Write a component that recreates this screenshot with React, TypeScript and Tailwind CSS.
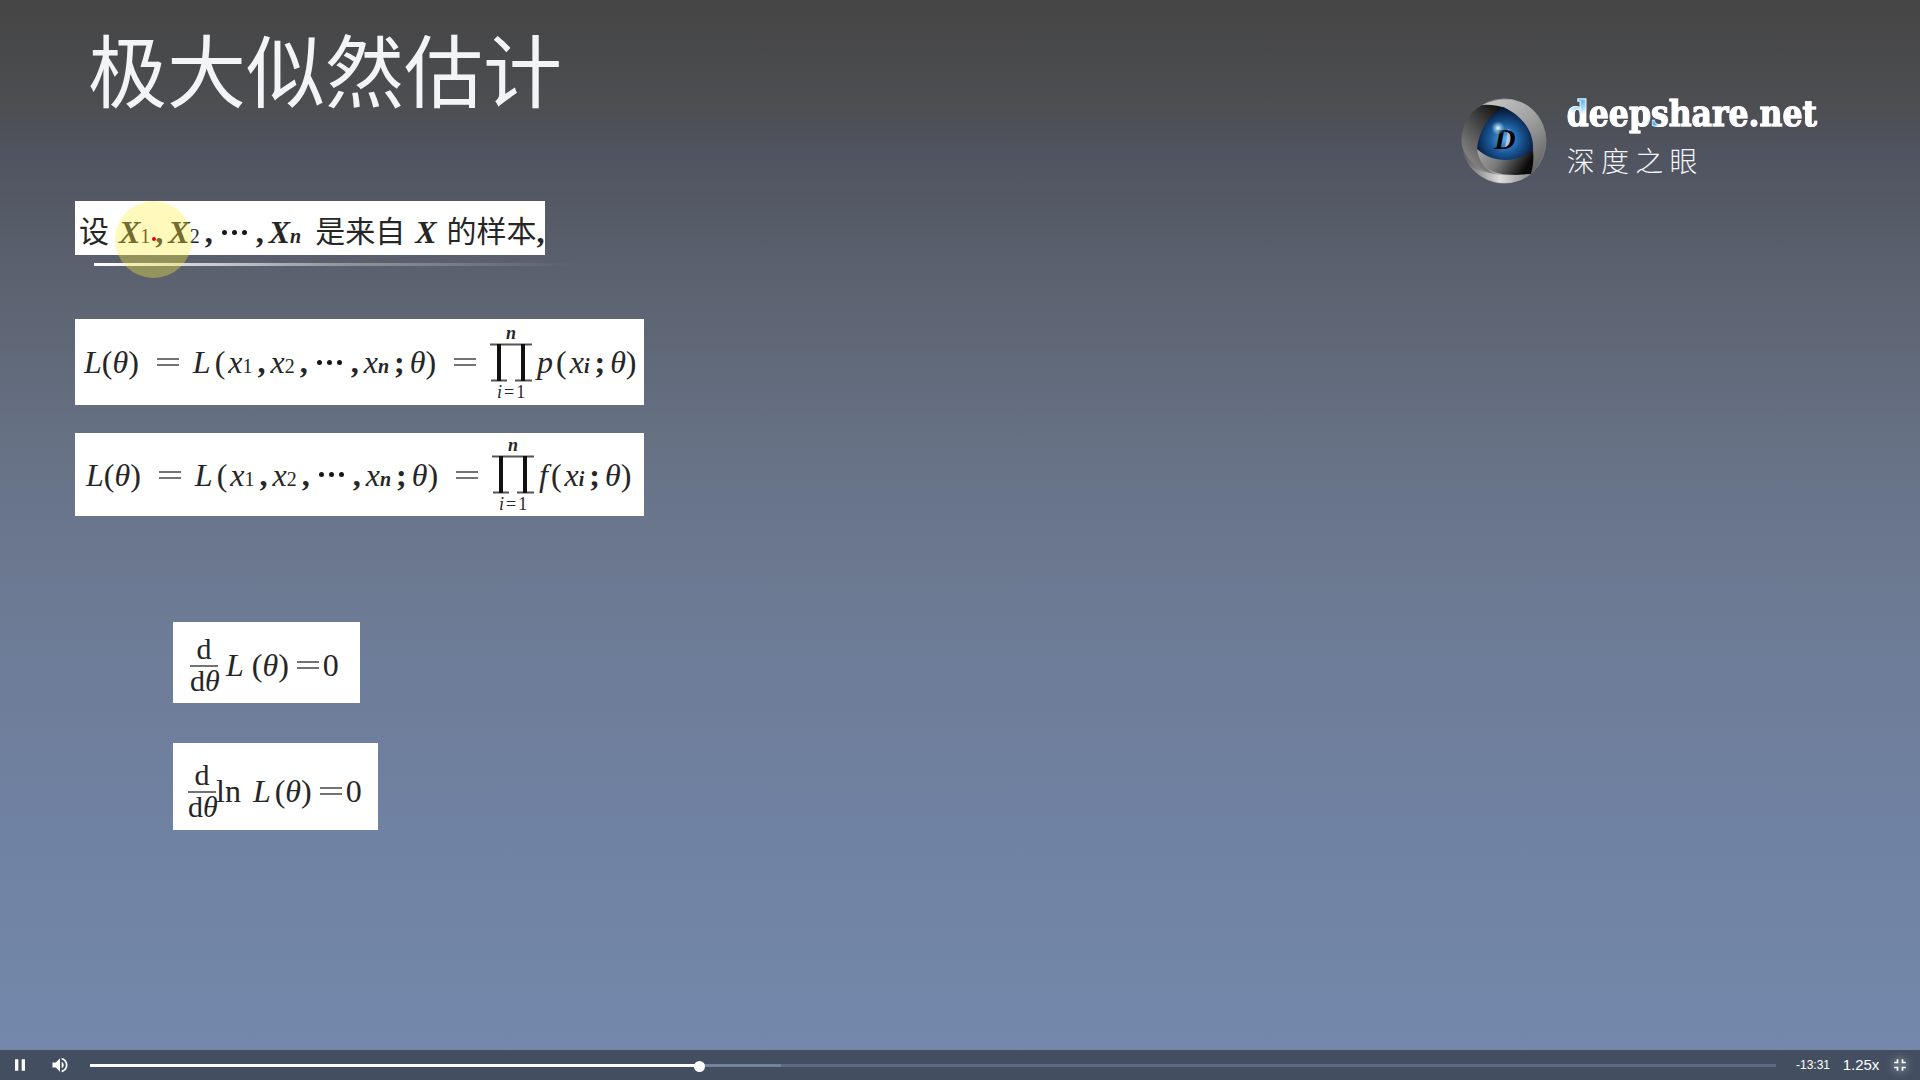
import React, { useState } from "react";
import { MdFullscreenExit, MdPause, MdVolumeUp } from "react-icons/md";

type Kids = { children: React.ReactNode };

const Sub = ({ children, italic = false }: Kids & { italic?: boolean }) => (
  <span className={italic ? "relative top-1 text-[20px] font-bold italic" : "relative top-1 text-[20px]"}>{children}</span>
);

const Punct = ({ children }: Kids) => <span className="px-[5px] font-bold">{children}</span>;

const Dots = () => (
  <span className="flex gap-[5px] px-1">
    <span className="size-[5px] rounded-full bg-neutral-900" />
    <span className="size-[5px] rounded-full bg-neutral-900" />
    <span className="size-[5px] rounded-full bg-neutral-900" />
  </span>
);

const Card = ({ children, className }: Kids & { className: string }) => (
  <div
    className={`flex items-center overflow-hidden whitespace-nowrap bg-white font-['Liberation_Serif','Noto_Sans_CJK_SC',serif] text-[32px] leading-8 text-neutral-800 ${className}`}
  >
    {children}
  </div>
);

const Theta = () => (
  <>
    <span>(</span>
    <i>θ</i>
    <span>)</span>
  </>
);

const Equals = ({ tight = false }: { tight?: boolean }) => (
  <span className={`flex w-[22px] flex-col gap-[4px] ${tight ? "mr-1 ml-2" : "mr-[14px] ml-[18px]"}`}>
    <span className="h-[2px] bg-neutral-500" />
    <span className="h-[2px] bg-neutral-500" />
  </span>
);

const Product = () => (
  <span className="flex w-[42px] flex-col items-center text-[18px] leading-4">
    <i className="font-bold">n</i>
    <svg viewBox="0 0 42 39" className="my-[2px] h-[39px] w-[42px]" aria-label="product">
      <path d="M0 1.5h42M1 37.5h16M25 37.5h17" stroke="#555" strokeWidth="2" />
      <path d="M9 1v37M33 1v37" stroke="#111" strokeWidth="4" />
    </svg>
    <span className="flex gap-[2px]">
      <i>i</i>
      <span>=</span>
      <span>1</span>
    </span>
  </span>
);

const Likelihood = ({ fn, className }: { fn: string; className: string }) => (
  <Card className={`w-[569px] ${className}`}>
    <i>L</i>
    <Theta />
    <Equals />
    <i>L</i>
    <span className="pl-1">(</span>
    <i className="pl-[3px]">x</i>
    <Sub>1</Sub>
    <Punct>,</Punct>
    <i>x</i>
    <Sub>2</Sub>
    <Punct>,</Punct>
    <Dots />
    <Punct>,</Punct>
    <i>x</i>
    <Sub italic>n</Sub>
    <Punct>;</Punct>
    <i>θ</i>
    <span>)</span>
    <Equals />
    <Product />
    <i className="pl-[5px]">{fn}</i>
    <span className="pl-[3px]">(</span>
    <i className="pl-[3px]">x</i>
    <Sub italic>i</Sub>
    <Punct>;</Punct>
    <i>θ</i>
    <span>)</span>
  </Card>
);

const Derivative = () => (
  <span className="flex w-7 flex-col items-center text-[30px] leading-6">
    <span className="pb-[4px]">d</span>
    <span className="w-7 border-t-2 border-neutral-500 pt-[2px] text-center">
      d<i>θ</i>
    </span>
  </span>
);

const Logo = () => (
  <div className="mt-[97px] mr-[103px] flex gap-5">
    <svg viewBox="0 0 86 86" className="mt-[1px] size-[86px]" aria-hidden="true">
      <defs>
        <linearGradient id="rim" x1="0" y1="0.4" x2="1" y2="0.6">
          <stop offset="0" stopColor="#555" />
          <stop offset="0.5" stopColor="#aaa" />
          <stop offset="1" stopColor="#777" />
        </linearGradient>
        <linearGradient id="left" x1="0.8" y1="0" x2="0.1" y2="1">
          <stop offset="0" stopColor="#111" />
          <stop offset="0.5" stopColor="#555" />
          <stop offset="1" stopColor="#999" />
        </linearGradient>
        <linearGradient id="right" x1="0" y1="0" x2="0.8" y2="1">
          <stop offset="0" stopColor="#ccc" />
          <stop offset="0.6" stopColor="#999" />
          <stop offset="1" stopColor="#666" />
        </linearGradient>
        <linearGradient id="low" x1="0" y1="0" x2="1" y2="0.3">
          <stop offset="0" stopColor="#aaa" />
          <stop offset="0.5" stopColor="#777" />
          <stop offset="1" stopColor="#0a0a0a" />
        </linearGradient>
        <linearGradient id="base" x1="0" y1="0" x2="1" y2="0">
          <stop offset="0" stopColor="#777" />
          <stop offset="0.5" stopColor="#ddd" />
          <stop offset="1" stopColor="#888" />
        </linearGradient>
        <radialGradient id="iris" cx="0.5" cy="0.6" r="0.55">
          <stop offset="0" stopColor="#5cabe0" />
          <stop offset="0.5" stopColor="#19599a" />
          <stop offset="1" stopColor="#071a3a" />
        </radialGradient>
        <radialGradient id="glint">
          <stop offset="0" stopColor="#fff" />
          <stop offset="1" stopColor="#6cc8ff" stopOpacity="0" />
        </radialGradient>
      </defs>
      <circle cx="43" cy="43" r="42.5" fill="url(#rim)" />
      <path d="M21 7C36 0 54 0 67 8C88 23 91 53 71 75C73 45 63 22 43 9Z" fill="url(#right)" />
      <path d="M21 7C30 6 38 8 44 10C28 19 18 34 17 51C18 64 24 72 34 76C15 71 1 58 .5 43C1 27 8 14 21 7Z" fill="url(#left)" />
      <path d="M16 50C31 63 54 62 72 52C73 62 72 69 70 76C52 78 37 77 27 71C20 66 17 59 16 50Z" fill="url(#low)" />
      <path d="M8 67C26 79 48 78 70 76C53 90 24 88 8 67Z" fill="url(#base)" />
      <path d="M42 9C62 18 73 34 72 52C55 66 31 65 16 51C18 32 27 18 42 9Z" fill="url(#iris)" />
      <path d="M47 31q8 4 2 17l-5 2z" fill="#c5cdf0" opacity="0.8" />
      <text x="33" y="51" className="font-['Liberation_Serif',serif] text-[30px] font-bold italic" fill="#03060c">
        D
      </text>
      <circle cx="37" cy="30" r="7" fill="url(#glint)" />
    </svg>
    <div className="text-white">
      <div className="-mt-[6px] bg-white bg-[radial-gradient(circle_at_12px_8px,#3fa9f0_0,#8fd0fa_8px,transparent_16px),radial-gradient(circle_at_86px_32px,#3fa9f0_0,#3fa9f0_3px,transparent_6px)] bg-clip-text font-['DejaVu_Serif_Condensed','DejaVu_Serif',serif] text-[35px] leading-[46px] font-bold text-transparent [-webkit-text-stroke:1px_#ffffffb0]">
        deepshare.net
      </div>
      <div className="mt-[3px] font-['Noto_Sans_CJK_SC',sans-serif] text-[28px] leading-10 font-light text-gray-100">深 度 之 眼</div>
    </div>
  </div>
);

export default function App() {
  const [position, setPosition] = useState(36.2);

  return (
    <div className="flex min-h-screen flex-col bg-[#434f61]">
      <main className="flex-1 bg-[linear-gradient(180deg,#454545_0%,#4c4d50_9%,#505460_15%,#5a606d_25%,#667184_42%,#6d7b95_59%,#7082a3_80%,#7388ab_100%)]">
        <header className="flex h-[201px] items-start justify-between pl-[88px]">
          <h1 className="mt-[22px] font-['Noto_Sans_CJK_SC',sans-serif] text-[79px] leading-[92px] font-normal text-gray-100">
            极大似然估计
          </h1>
          <Logo />
        </header>

        <section className="flex flex-col items-start pl-[75px]">
          <div className="relative">
            <Card className="h-[54px] w-[470px] pt-2 pl-1">
              <span className="text-[30px]">设</span>
              <i className="pl-[10px] font-bold">X</i>
              <Sub>1</Sub>
              <Punct>,</Punct>
              <i className="font-bold">X</i>
              <Sub>2</Sub>
              <Punct>,</Punct>
              <Dots />
              <Punct>,</Punct>
              <i className="font-bold">X</i>
              <Sub italic>n</Sub>
              <span className="pl-[14px] text-[30px]">是来自</span>
              <i className="px-[10px] font-bold">X</i>
              <span className="text-[30px]">的样本</span>
              <span className="font-bold">,</span>
            </Card>
            <div className="mt-2 ml-[19px] h-[3px] w-[480px] bg-linear-to-r from-white via-white/35 to-transparent" />
            <span className="absolute top-0 left-10 size-[77px] rounded-full bg-[#fff23c]/35" />
            <span className="absolute top-9 left-[77px] size-1 rounded-full bg-red-600" />
          </div>
          <Likelihood fn="p" className="mt-[53px] h-[86px] pl-[9px]" />
          <Likelihood fn="f" className="mt-7 h-[83px] pl-[11px]" />
        </section>

        <section className="flex flex-col items-start gap-10 pt-[106px] pb-10 pl-[173px]">
          <Card className="h-[81px] w-[187px] pt-1 pl-[17px]">
            <Derivative />
            <i className="px-2">L</i>
            <Theta />
            <Equals tight />
            <span>0</span>
          </Card>
          <Card className="h-[87px] w-[205px] pt-2 pl-[15px]">
            <Derivative />
            <span className="pr-3">ln</span>
            <i className="pr-1">L</i>
            <Theta />
            <Equals tight />
            <span>0</span>
          </Card>
        </section>
      </main>

      <footer className="flex h-[30px] shrink-0 items-center font-['Liberation_Sans',sans-serif] text-white">
        <button aria-label="Pause" className="flex w-10 justify-center">
          <MdPause size={20} />
        </button>
        <button aria-label="Mute" className="flex w-10 justify-center">
          <MdVolumeUp size={20} />
        </button>
        <div className="relative ml-[10px] h-[3px] flex-1 bg-[#5c6a84]">
          <div className="h-full w-[41%] bg-[#73829d]" />
          <div className="absolute inset-y-0 left-0 bg-white" style={{ width: `${position}%` }} />
          <div className="absolute -top-[3px] -ml-[6px] size-[11px] rounded-full bg-white" style={{ left: `${position}%` }} />
          <input
            type="range"
            aria-label="Seek"
            min={0}
            max={100}
            step={0.1}
            value={position}
            onChange={(e) => setPosition(Number(e.target.value))}
            className="absolute -top-2 left-0 h-5 w-full cursor-pointer opacity-0"
          />
        </div>
        <span className="ml-5 w-[34px] text-[12px]">-13:31</span>
        <button className="ml-3 w-[38px] text-[15px]">1.25x</button>
        <button aria-label="Exit fullscreen" className="flex w-10 justify-center drop-shadow-[0_0_4px_white]">
          <MdFullscreenExit size={20} />
        </button>
      </footer>
    </div>
  );
}
